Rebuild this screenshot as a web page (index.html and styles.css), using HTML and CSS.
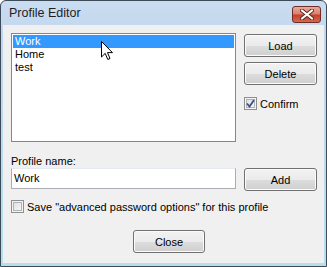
FILE: index.html
```html
<!DOCTYPE html>
<html lang="en">
<head>
    <meta charset="UTF-8">
    <title>Profile Editor</title>
    <link rel="stylesheet" href="styles.css">
</head>
<body>

    <div class="window">
        <!-- Title bar -->
        <div class="titlebar">
            <span class="title">Profile Editor</span>
            <span class="close-x">
                <svg width="14" height="11" viewBox="0 0 14 11">
                    <path d="M2 1.5 L12 9.5 M12 1.5 L2 9.5" stroke="#5a2a22" stroke-width="4" stroke-linecap="round"/>
                    <path d="M2 1.5 L12 9.5 M12 1.5 L2 9.5" stroke="#fff" stroke-width="2.2" stroke-linecap="round"/>
                </svg>
            </span>
        </div>

        <div class="client">
            <div class="top-row">
                <ul class="list">
                    <li class="selected">Work</li>
                    <li>Home</li>
                    <li>test</li>
                </ul>
                <div class="side">
                    <button class="btn">Load</button>
                    <button class="btn">Delete</button>
                    <label class="check confirm">
                        <span class="box">
                            <svg width="9" height="9" viewBox="0 0 9 9">
                                <path d="M1 4.5 L3.5 7.5 L8 1" fill="none" stroke="#3b5089" stroke-width="1.8"/>
                            </svg>
                        </span>
                        Confirm
                    </label>
                </div>
            </div>

            <div class="label">Profile name:</div>
            <div class="name-row">
                <div class="input">Work</div>
                <button class="btn">Add</button>
            </div>

            <label class="check save">
                <span class="box"></span>
                Save "advanced password options" for this profile
            </label>

            <div class="footer">
                <button class="btn close">Close</button>
            </div>
        </div>

        <!-- mouse pointer over the list -->
        <svg class="cursor" width="13" height="20" viewBox="0 0 13 20">
            <path d="M0.5 0.5 L0.5 16 L4.2 12.4 L6.8 18.5 L9 17.5 L6.5 11.6 L11.5 11.6 Z" fill="#fff" stroke="#000" stroke-width="1"/>
        </svg>
    </div>

</body>
</html>
```

FILE: styles.css
```css
body {
    margin: 0;
    font-family: 'Liberation Sans', Arial, sans-serif;
    font-size: 11px;
    color: #000;
    background: #fff;
}
.window {
    position: relative;
    width: 327px;
    height: 267px;
    box-sizing: border-box;
    border: 1px solid #3d4a58;
    border-radius: 6px 6px 0 0;
    background: linear-gradient(#cadcf0, #c0d6ee 40px, #b4e0ec);
    padding: 0 2px 3px 2px;
    overflow: hidden;
}
.titlebar {
    height: 24px;
    display: flex;
    align-items: center;
    justify-content: space-between;
    padding: 0 3px 0 6px;
}
.title {
    font-family: 'Liberation Sans', Arial, sans-serif;
    font-size: 12.5px;
    color: #1e1e1e;
}
.close-x {
    width: 29px;
    height: 17px;
    margin-top: 2px;
    box-sizing: border-box;
    border: 1px solid #6e2e25;
    border-radius: 3px;
    background: linear-gradient(#e9a99b, #d9826f 45%, #c6402a 55%, #d36a4c);
    display: flex;
    align-items: center;
    justify-content: center;
}
.client {
    background: #f0f0f0;
    height: 238px;
    padding: 8px 6px 0 8px;
    box-sizing: border-box;
}
.top-row {
    display: flex;
    gap: 8px;
}
.list {
    list-style: none;
    margin: 0;
    width: 225px;
    height: 109px;
    box-sizing: border-box;
    border: 1px solid #828790;
    background: #fff;
    padding: 1px;
}
.list li {
    height: 13px;
    line-height: 13px;
    padding-left: 2px;
}
.list li.selected {
    background: #3399ff;
    color: #fff;
}
.side {
    display: flex;
    flex-direction: column;
    gap: 5px;
    padding-top: 1px;
}
.btn {
    width: 73px;
    height: 23px;
    font-family: inherit;
    font-size: 11px;
    color: #000;
    border: 1px solid #707070;
    border-radius: 3px;
    background: linear-gradient(#f2f2f2, #ebebeb 50%, #dddddd 51%, #cfcfcf);
    box-shadow: inset 0 0 0 1px #fbfbfb;
    padding: 0;
}
.check {
    display: flex;
    align-items: center;
    gap: 3px;
}
.box {
    width: 13px;
    height: 13px;
    box-sizing: border-box;
    border: 1px solid #8e8f8f;
    background: linear-gradient(135deg, #dcdcdc, #fbfbfb);
    box-shadow: inset 0 0 0 1px #f4f4f4, inset 0 0 0 2px #aeb3b9;
    display: flex;
    align-items: center;
    justify-content: center;
}
.confirm {
    margin-top: 7px;
}
.label {
    margin-top: 12px;
    line-height: 14px;
}
.name-row {
    display: flex;
    gap: 8px;
    align-items: flex-start;
}
.input {
    width: 225px;
    height: 21px;
    box-sizing: border-box;
    border: 1px solid #abadb3;
    border-top-color: #e3e9ef;
    background: #fff;
    padding: 3px 0 0 2px;
}
.save {
    margin-top: 9px;
}
.footer {
    margin-top: 17px;
    padding-left: 122px;
}
.close {
    width: 72px;
}
.cursor {
    position: absolute;
    left: 100px;
    top: 40px;
}
```
